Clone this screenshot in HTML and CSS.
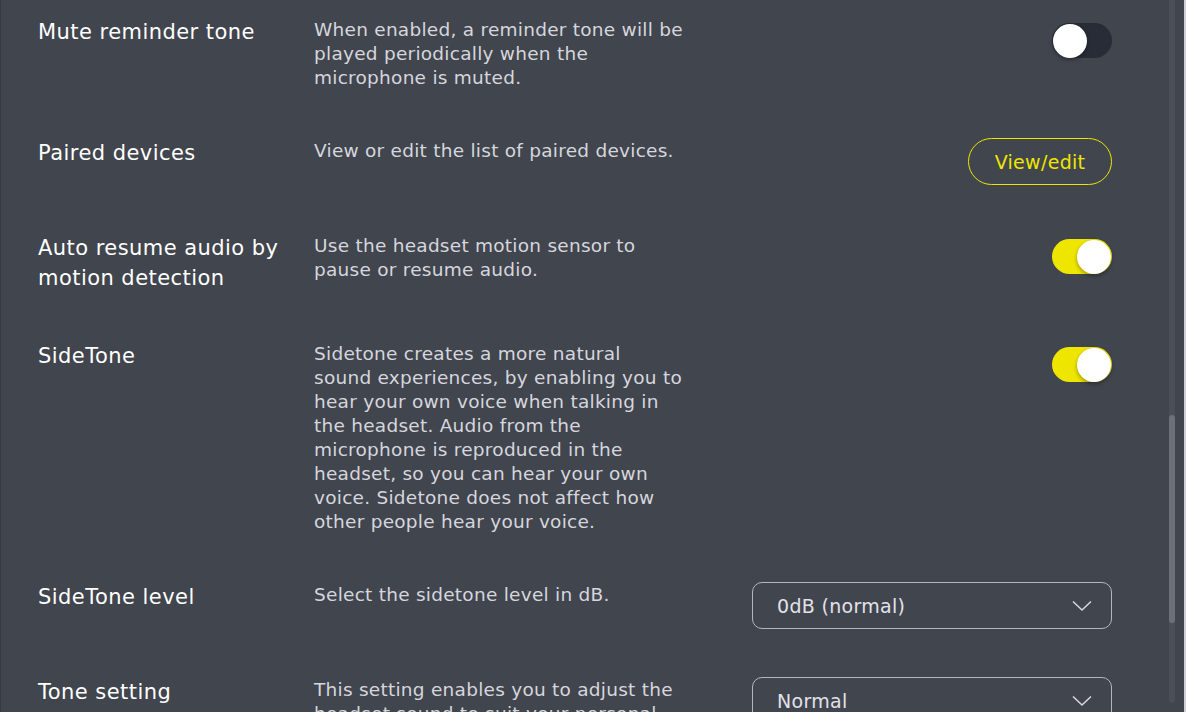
FILE: index.html
```html
<!DOCTYPE html>
<html lang="en">
<head>
<meta charset="utf-8">
<title>Settings</title>
<link rel="stylesheet" href="styles.css">
</head>
<body>
<div class="window">
  <main class="content">
    <section class="row">
      <h3 class="title">Mute reminder tone</h3>
      <p class="desc">When enabled, a reminder tone will be played periodically when the microphone is muted.</p>
      <div class="control"><span class="toggle"><span class="knob"></span></span></div>
    </section>
    <section class="row">
      <h3 class="title">Paired devices</h3>
      <p class="desc">View or edit the list of paired devices.</p>
      <div class="control"><button class="btn">View/edit</button></div>
    </section>
    <section class="row">
      <h3 class="title">Auto resume audio by motion detection</h3>
      <p class="desc">Use the headset motion sensor to pause or resume audio.</p>
      <div class="control"><span class="toggle on"><span class="knob"></span></span></div>
    </section>
    <section class="row">
      <h3 class="title">SideTone</h3>
      <p class="desc">Sidetone creates a more natural sound experiences, by enabling you to hear your own voice when talking in the headset. Audio from the microphone is reproduced in the headset, so you can hear your own voice. Sidetone does not affect how other people hear your voice.</p>
      <div class="control"><span class="toggle on"><span class="knob"></span></span></div>
    </section>
    <section class="row">
      <h3 class="title">SideTone level</h3>
      <p class="desc">Select the sidetone level in dB.</p>
      <div class="control"><div class="select"><span>0dB (normal)</span><svg class="chev" width="20" height="12" viewBox="0 0 20 12"><path d="M1 1.5 L10 10 L19 1.5" fill="none" stroke="#d8d8e0" stroke-width="1.5"/></svg></div></div>
    </section>
    <section class="row">
      <h3 class="title">Tone setting</h3>
      <p class="desc">This setting enables you to adjust the headset sound to suit your personal preferences.</p>
      <div class="control"><div class="select"><span>Normal</span><svg class="chev" width="20" height="12" viewBox="0 0 20 12"><path d="M1 1.5 L10 10 L19 1.5" fill="none" stroke="#d8d8e0" stroke-width="1.5"/></svg></div></div>
    </section>
  </main>
  <div class="scrollcol"><div class="track"><div class="thumb"></div></div></div>
  <div class="edge"></div>
</div>
</body>
</html>
```
FILE: styles.css
```css
html, body {
  margin: 0;
  padding: 0;
  height: 100%;
  overflow: hidden;
  background: #41454d;
}
.window {
  display: flex;
  height: 712px;
  border-left: 1px solid #363a42;
  box-sizing: border-box;
  font-family: "DejaVu Sans", "Noto Sans", sans-serif;
}
.content {
  flex: 1;
  padding: 17px 0 0 37px;
  overflow: hidden;
}
.row {
  display: grid;
  grid-template-columns: 276px 369.5px 1fr;
  margin-bottom: 48px;
  padding-right: 47px;
}
.title {
  margin: 0;
  font-size: 21px;
  letter-spacing: 0.45px;
  line-height: 30px;
  font-weight: 400;
  color: #ffffff;
  padding-right: 10px;
}
.desc {
  margin: 1px 0 0 0;
  font-size: 18.5px;
  letter-spacing: 0.25px;
  line-height: 24px;
  color: #d6d6de;
}
.control {
  display: flex;
  justify-content: flex-end;
  align-items: flex-start;
}
.toggle {
  margin-top: 6px;
  width: 60px;
  height: 35px;
  border-radius: 18px;
  background: #282c36;
  display: flex;
  align-items: center;
  padding: 0 1px;
  box-sizing: border-box;
}
.toggle.on {
  background: #efe600;
  justify-content: flex-end;
}
.knob {
  width: 34px;
  height: 34px;
  border-radius: 50%;
  background: #ffffff;
  box-shadow: 0 2px 4px rgba(0,0,0,0.35);
}
.btn {
  margin-top: 0;
  width: 144px;
  height: 47px;
  border: 1px solid #f0e600;
  border-radius: 24px;
  background: transparent;
  color: #f0e600;
  font-family: inherit;
  font-size: 19px;
  letter-spacing: 0.3px;
  padding: 0;
}
.select {
  margin-top: 0;
  width: 360px;
  height: 47px;
  box-sizing: border-box;
  border: 1px solid #b4b6be;
  border-radius: 10px;
  display: flex;
  align-items: center;
  justify-content: space-between;
  padding: 0 19px 0 24px;
  font-size: 19px;
  letter-spacing: 0.3px;
  color: #e2e2ea;
}
.scrollcol {
  width: 16px;
  padding: 0 9px 0 0;
  display: flex;
  justify-content: flex-end;
}
.track {
  width: 6px;
  height: 703px;
  background: #4b4f58;
  border-radius: 0 0 3px 3px;
  padding-top: 415px;
  box-sizing: border-box;
}
.thumb {
  height: 208px;
  background: #6c7078;
  border-radius: 3px;
}
.edge {
  width: 2px;
  background: #cfcfdb;
}
```
